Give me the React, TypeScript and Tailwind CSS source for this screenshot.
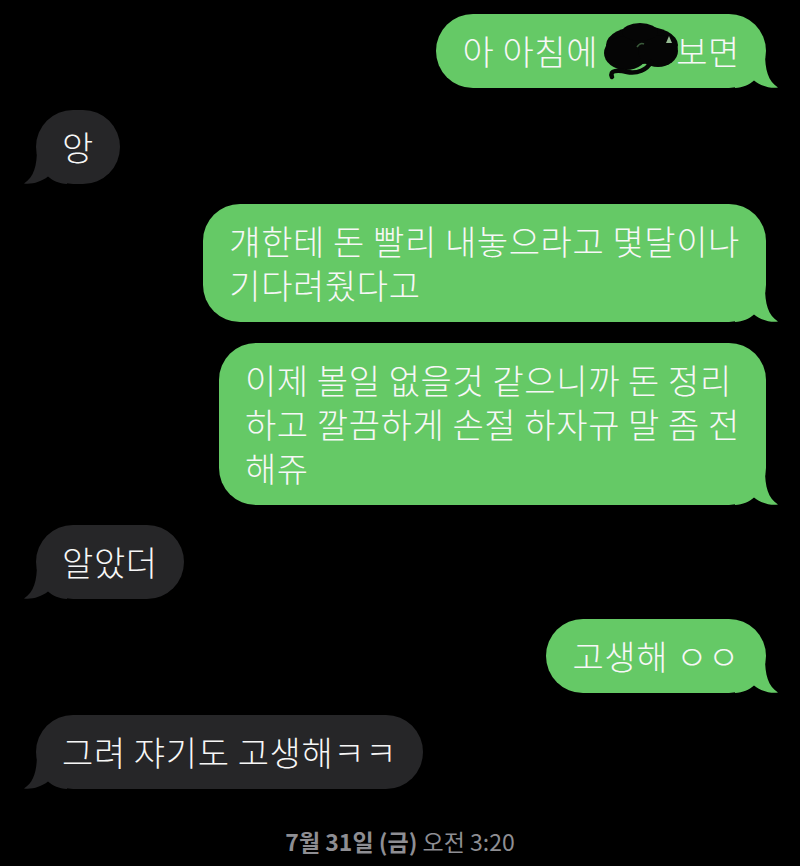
import type { ReactNode } from "react";

const GREEN = "#65c966";
const GRAY = "#262628";

function Tail({ side, color }: { side: "left" | "right"; color: string }) {
  return (
    <svg
      className={`absolute bottom-0 h-[36px] w-[45px] ${side === "right" ? "right-[-14px]" : "left-[-14px] -scale-x-100"}`}
      viewBox="0 0 45 36"
      aria-hidden
    >
      <path
        d="M0 0 H30 C30 18 33 29 43 35.5 C35 36.5 26 34 19 28.5 C14 33 8 35.5 0 36 Z"
        fill={color}
      />
    </svg>
  );
}

function Bubble({
  side,
  children,
  mt,
}: {
  side: "left" | "right";
  children: ReactNode;
  mt: string;
}) {
  const right = side === "right";
  return (
    <div className={`flex ${right ? "justify-end pr-[34px]" : "justify-start pl-[36px]"} ${mt}`}>
      <div
        className={`relative rounded-[37px] px-[26px] py-[15px] text-[34px] leading-[44px] font-light tracking-[0.6px] text-[#f7f7f7] ${
          right ? "bg-[#65c966]" : "bg-[#262628]"
        }`}
      >
        <Tail side={side} color={right ? GREEN : GRAY} />
        <span className="relative whitespace-nowrap">{children}</span>
      </div>
    </div>
  );
}

function Scribble() {
  return (
    <span className="relative inline-block h-[44px] w-[70px] align-top">
      <svg className="absolute left-[-6px] top-[-8px] h-[64px] w-[84px]" viewBox="0 0 84 64" aria-hidden>
        <ellipse cx="42" cy="24" rx="36" ry="19" fill="#050505" />
        <ellipse cx="26" cy="32" rx="22" ry="17" fill="#050505" />
        <ellipse cx="58" cy="30" rx="20" ry="16" fill="#050505" />
        <ellipse cx="40" cy="11" rx="18" ry="9" fill="#050505" />
        <path d="M12 56 C9 49 18 49 27 51 C37 53 47 49 51 41" stroke="#050505" strokeWidth="4.5" fill="none" strokeLinecap="round" />
        <path d="M66 22 l3 -7 l3 7 z" fill="#b9e8b5" opacity="0.8" />
        <path d="M37 26 c2 -3 5 -4 7 -3" stroke="#3a5a3a" strokeWidth="1.5" fill="none" />
      </svg>
    </span>
  );
}

export default function App() {
  return (
    <div
      className="h-[866px] w-[800px] overflow-hidden bg-black pt-[14px]"
      style={{ fontFamily: '"Noto Sans CJK KR", "Noto Sans", sans-serif' }}
    >
      <Bubble side="right" mt="mt-0">
        아 아침에 <Scribble />보면
      </Bubble>
      <Bubble side="left" mt="mt-[22px]">
        앙
      </Bubble>
      <Bubble side="right" mt="mt-[20px]">
        걔한테 돈 빨리 내놓으라고 몇달이나
        <br />
        기다려줬다고
      </Bubble>
      <Bubble side="right" mt="mt-[21px]">
        이제 볼일 없을것 같으니까 돈 정리
        <br />
        하고 깔끔하게 손절 하자규 말 좀 전
        <br />
        해쥬
      </Bubble>
      <Bubble side="left" mt="mt-[20px]">
        알았더
      </Bubble>
      <Bubble side="right" mt="mt-[20px]">
        고생해 ㅇㅇ
      </Bubble>
      <Bubble side="left" mt="mt-[22px]">
        그려 쟈기도 고생해ㅋㅋ
      </Bubble>
      <div className="mt-[38px] text-center text-[23px] leading-[28px] text-[#8e8e93]">
        <span className="font-semibold">7월 31일 (금)</span> 오전 3:20
      </div>
    </div>
  );
}
